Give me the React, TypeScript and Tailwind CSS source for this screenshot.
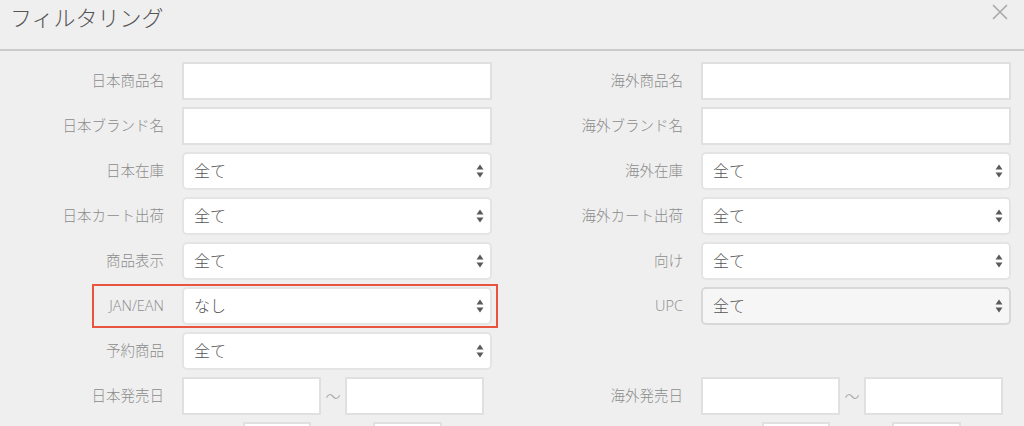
import React from "react";

type Field =
  | { label: string; kind: "text" }
  | { label: string; kind: "select"; value: string; disabled?: boolean; marked?: boolean }
  | { label: string; kind: "date" }
  | null;

const rows: [Field, Field][] = [
  [{ label: "日本商品名", kind: "text" }, { label: "海外商品名", kind: "text" }],
  [{ label: "日本ブランド名", kind: "text" }, { label: "海外ブランド名", kind: "text" }],
  [{ label: "日本在庫", kind: "select", value: "全て" }, { label: "海外在庫", kind: "select", value: "全て" }],
  [{ label: "日本カート出荷", kind: "select", value: "全て" }, { label: "海外カート出荷", kind: "select", value: "全て" }],
  [{ label: "商品表示", kind: "select", value: "全て" }, { label: "向け", kind: "select", value: "全て" }],
  [
    { label: "JAN/EAN", kind: "select", value: "なし", marked: true },
    { label: "UPC", kind: "select", value: "全て", disabled: true },
  ],
  [{ label: "予約商品", kind: "select", value: "全て" }, null],
  [{ label: "日本発売日", kind: "date" }, { label: "海外発売日", kind: "date" }],
];

const Arrows = () => (
  <svg width="8" height="14" viewBox="0 0 8 14" className="shrink-0">
    <path d="M4 0.5 L7.5 5.5 L0.5 5.5 Z" fill="#5a5a5a" />
    <path d="M4 13.5 L7.5 8.5 L0.5 8.5 Z" fill="#5a5a5a" />
  </svg>
);

const Control = ({ field }: { field: Exclude<Field, null> }) => {
  if (field.kind === "text") {
    return <div className="w-[310px] h-[38px] bg-white border-2 border-[#e0e0e0]" />;
  }
  if (field.kind === "date") {
    return (
      <div className="flex items-center w-[310px] h-[38px]">
        <div className="w-[139px] h-full bg-white border-2 border-[#e0e0e0]" />
        <span className="w-[24px] text-center text-[15px] font-light text-[#a0a0a0]">〜</span>
        <div className="w-[139px] h-full bg-white border-2 border-[#e0e0e0]" />
      </div>
    );
  }
  return (
    <div
      className={`flex items-center justify-between w-[310px] h-[38px] pl-[10px] pr-[6px] rounded-[5px] border-2 ${
        field.disabled ? "bg-[#f6f6f6] border-[#d8d8d8]" : "bg-white border-[#e4e4e4]"
      }`}
    >
      <span className="text-[16px] font-light text-[#555]">{field.value}</span>
      <Arrows />
    </div>
  );
};

const Cell = ({ field }: { field: Field }) => {
  if (!field) return <div className="h-[38px]" />;
  const marked = field.kind === "select" && field.marked;
  return (
    <div className="relative flex items-center h-[38px]">
      {marked && (
        <div className="absolute left-[92px] top-[-3px] w-[406px] h-[44px] border-2 border-[#e9543f] pointer-events-none" />
      )}
      <div className="w-[165px] pr-[1px] text-right text-[14.5px] font-light text-[#8c8c8c] whitespace-nowrap">
        {field.label}
      </div>
      <div className="ml-[17px]">
        <Control field={field} />
      </div>
    </div>
  );
};

const PartialRow = () => (
  <div className="flex h-[38px]">
    {[0, 1].map((i) => (
      <div key={i} className={i === 0 ? "w-[519px] flex" : "flex-1 flex"}>
        <div className="w-[243px]" />
        <div className="w-[68px] h-[38px] bg-white border-2 border-[#e0e0e0]" />
        <div className="w-[62px]" />
        <div className="w-[69px] h-[38px] bg-white border-2 border-[#e0e0e0]" />
      </div>
    ))}
  </div>
);

export default function App() {
  return (
    <div
      className="w-[1024px] h-[426px] overflow-hidden bg-[#efefef]"
      style={{ fontFamily: '"Open Sans", "Noto Sans CJK JP", sans-serif' }}
    >
      <div className="flex items-start justify-between h-[51px] border-b-2 border-[#cbcbcb]">
        <h1 className="pl-[10px] pt-[2px] text-[22px] leading-[30px] text-[#555] font-light">
          フィルタリング
        </h1>
        <svg width="18" height="16" viewBox="0 0 18 16" className="mt-[4px] mr-[15px]">
          <path d="M2 1 L16 15 M16 1 L2 15" stroke="#a9a9a9" strokeWidth="1.6" />
        </svg>
      </div>
      <div className="flex flex-col gap-[7px] pt-[11px]">
        {rows.map(([l, r], i) => (
          <div key={i} className="flex">
            <div className="w-[519px]">
              <Cell field={l} />
            </div>
            <div className="flex-1">
              <Cell field={r} />
            </div>
          </div>
        ))}
        <PartialRow />
      </div>
    </div>
  );
}
